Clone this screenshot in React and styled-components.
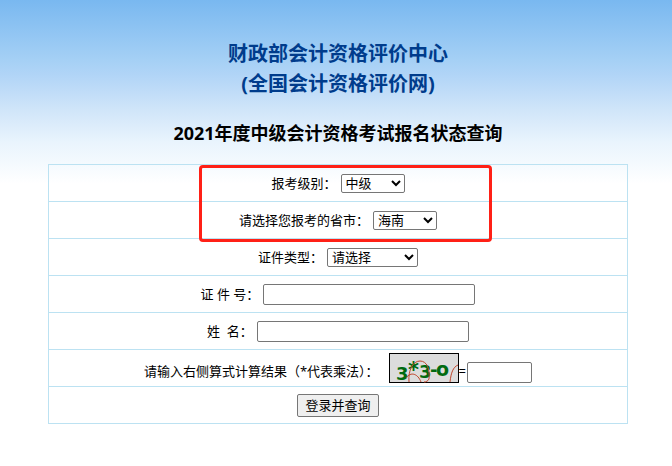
import React, { useState } from "react";
import styled, { createGlobalStyle, css } from "styled-components";

const levels = ["初级", "中级", "高级"];
const provinces = ["北京", "上海", "广东", "海南", "四川"];
const idTypes = ["请选择", "身份证", "护照", "军官证"];

const App = () => {
  const [form, setForm] = useState({
    level: "中级",
    province: "海南",
    idType: "请选择",
    idNumber: "",
    name: "",
    answer: "",
  });

  const bind = (key) => ({
    id: key,
    value: form[key],
    onChange: (e) => setForm({ ...form, [key]: e.target.value }),
  });

  const renderOptions = (items) =>
    items.map((item) => <option key={item}>{item}</option>);

  return (
    <>
      <GlobalStyle />
      <Page>
        <SiteTitle>
          财政部会计资格评价中心
          <br />
          (全国会计资格评价网)
        </SiteTitle>
        <FormTitle>2021年度中级会计资格考试报名状态查询</FormTitle>
        <Form onSubmit={(e) => e.preventDefault()}>
          <HighlightGroup>
            <Row>
              <Label htmlFor="level">报考级别：</Label>
              <Select {...bind("level")}>{renderOptions(levels)}</Select>
            </Row>
            <Row>
              <Label htmlFor="province">请选择您报考的省市：</Label>
              <Select {...bind("province")}>{renderOptions(provinces)}</Select>
            </Row>
            <Highlight />
          </HighlightGroup>
          <Row>
            <Label htmlFor="idType">证件类型：</Label>
            <Select wide {...bind("idType")}>
              {renderOptions(idTypes)}
            </Select>
          </Row>
          <Row>
            <Label htmlFor="idNumber">证 件 号：</Label>
            <Input type="text" {...bind("idNumber")} />
          </Row>
          <Row>
            <Label htmlFor="name">姓&nbsp; 名：</Label>
            <Input type="text" {...bind("name")} />
          </Row>
          <Row>
            <CaptchaLine>
              <Label htmlFor="answer">
                请输入右侧算式计算结果（*代表乘法）：
              </Label>
              <Captcha />
              <Equals>=</Equals>
              <Input short type="text" {...bind("answer")} />
            </CaptchaLine>
          </Row>
          <Row>
            <SubmitButton type="submit">登录并查询</SubmitButton>
          </Row>
        </Form>
      </Page>
    </>
  );
};

export default App;

const Captcha = () => (
  <CaptchaImage viewBox="0 0 70 30" role="img" aria-label="3*3-0">
    <rect x="0.5" y="0.5" width="69" height="29" fill="#dcdcdc" stroke="#000" />
    <g
      fill="#006a10"
      fontFamily="'DejaVu Sans', sans-serif"
      fontWeight="bold"
      fontSize="18"
    >
      <text x="7" y="27">3</text>
      <text x="19" y="24" fontSize="21">*</text>
      <text x="30" y="25">3</text>
      <text x="41" y="23">-</text>
      <text x="47" y="23" fontSize="19">o</text>
    </g>
    <g fill="none" stroke="#c0452b" strokeWidth="1">
      <path d="M20 29C19 17 24 8 31 8C38 8 41 16 40 26C39 28 37 29 35 29" />
      <path d="M17 25C22 18 29 21 32 29" />
      <path d="M61 29C62 20 64 14 69 12" />
    </g>
  </CaptchaImage>
);

const GlobalStyle = createGlobalStyle`
  body {
    margin: 0;
    background: #fff;
    color: #000;
    font-family: "Noto Sans", "Noto Sans CJK SC", sans-serif;
    font-size: 13px;
  }
`;

const Page = styled.main`
  padding: 39px 44px 42px 48px;
  background: linear-gradient(
    #79b8f0 0,
    #a5d0f5 60px,
    #b2d5f7 76px,
    #d0e5f9 110px,
    #e9f4fd 142px,
    #fff 184px
  );
`;

const SiteTitle = styled.h1`
  margin: 0;
  color: #003c8c;
  font-size: 20px;
  line-height: 30px;
  text-align: center;
`;

const FormTitle = styled.h2`
  margin: 20px 0 17px;
  font-size: 18px;
  line-height: 28px;
  text-align: center;
`;

const Form = styled.form`
  border: 1px solid #bce2f2;
  border-bottom: 0;
`;

const Row = styled.div`
  display: flex;
  align-items: center;
  justify-content: center;
  gap: 4px;
  min-height: 36px;
  border-bottom: 1px solid #bce2f2;
`;

const HighlightGroup = styled.div`
  position: relative;
`;

/* red frame drawn over the first two rows */
const Highlight = styled.div`
  position: absolute;
  top: 0;
  left: calc(50% - 139px);
  box-sizing: border-box;
  width: 293px;
  height: 77px;
  border: 3px solid #ff2016;
  border-radius: 4px;
  pointer-events: none;
`;

const Label = styled.label`
  line-height: 24px;
  white-space: nowrap;
`;

const fieldStyle = css`
  box-sizing: border-box;
  border: 1px solid #767676;
  border-radius: 2px;
  background-color: #fff;
  color: #000;
  font-family: "Liberation Sans", "Noto Sans CJK SC", sans-serif;
  font-size: 13px;
`;

const Select = styled.select.withConfig({
  shouldForwardProp: (prop) => prop !== "wide",
})`
  ${fieldStyle}
  width: ${({ wide }) => (wide ? "91px" : "64px")};
  height: 19px;
`;

const Input = styled.input.withConfig({
  shouldForwardProp: (prop) => prop !== "short",
})`
  ${fieldStyle}
  width: ${({ short }) => (short ? "65px" : "212px")};
  height: 21px;
`;

const CaptchaLine = styled.div`
  display: flex;
  align-items: flex-end;
`;

const CaptchaImage = styled.svg`
  display: block;
  width: 70px;
  height: 30px;
  margin-left: 10px;
  overflow: visible;
`;

const Equals = styled.span`
  padding-right: 1px;
  line-height: 24px;
`;

const SubmitButton = styled.button`
  box-sizing: border-box;
  height: 23px;
  padding: 0 7px;
  border: 1px solid #767676;
  border-radius: 2px;
  background: #efefef;
  color: #000;
  font-family: inherit;
  font-size: 13px;
  line-height: 20px;
`;
